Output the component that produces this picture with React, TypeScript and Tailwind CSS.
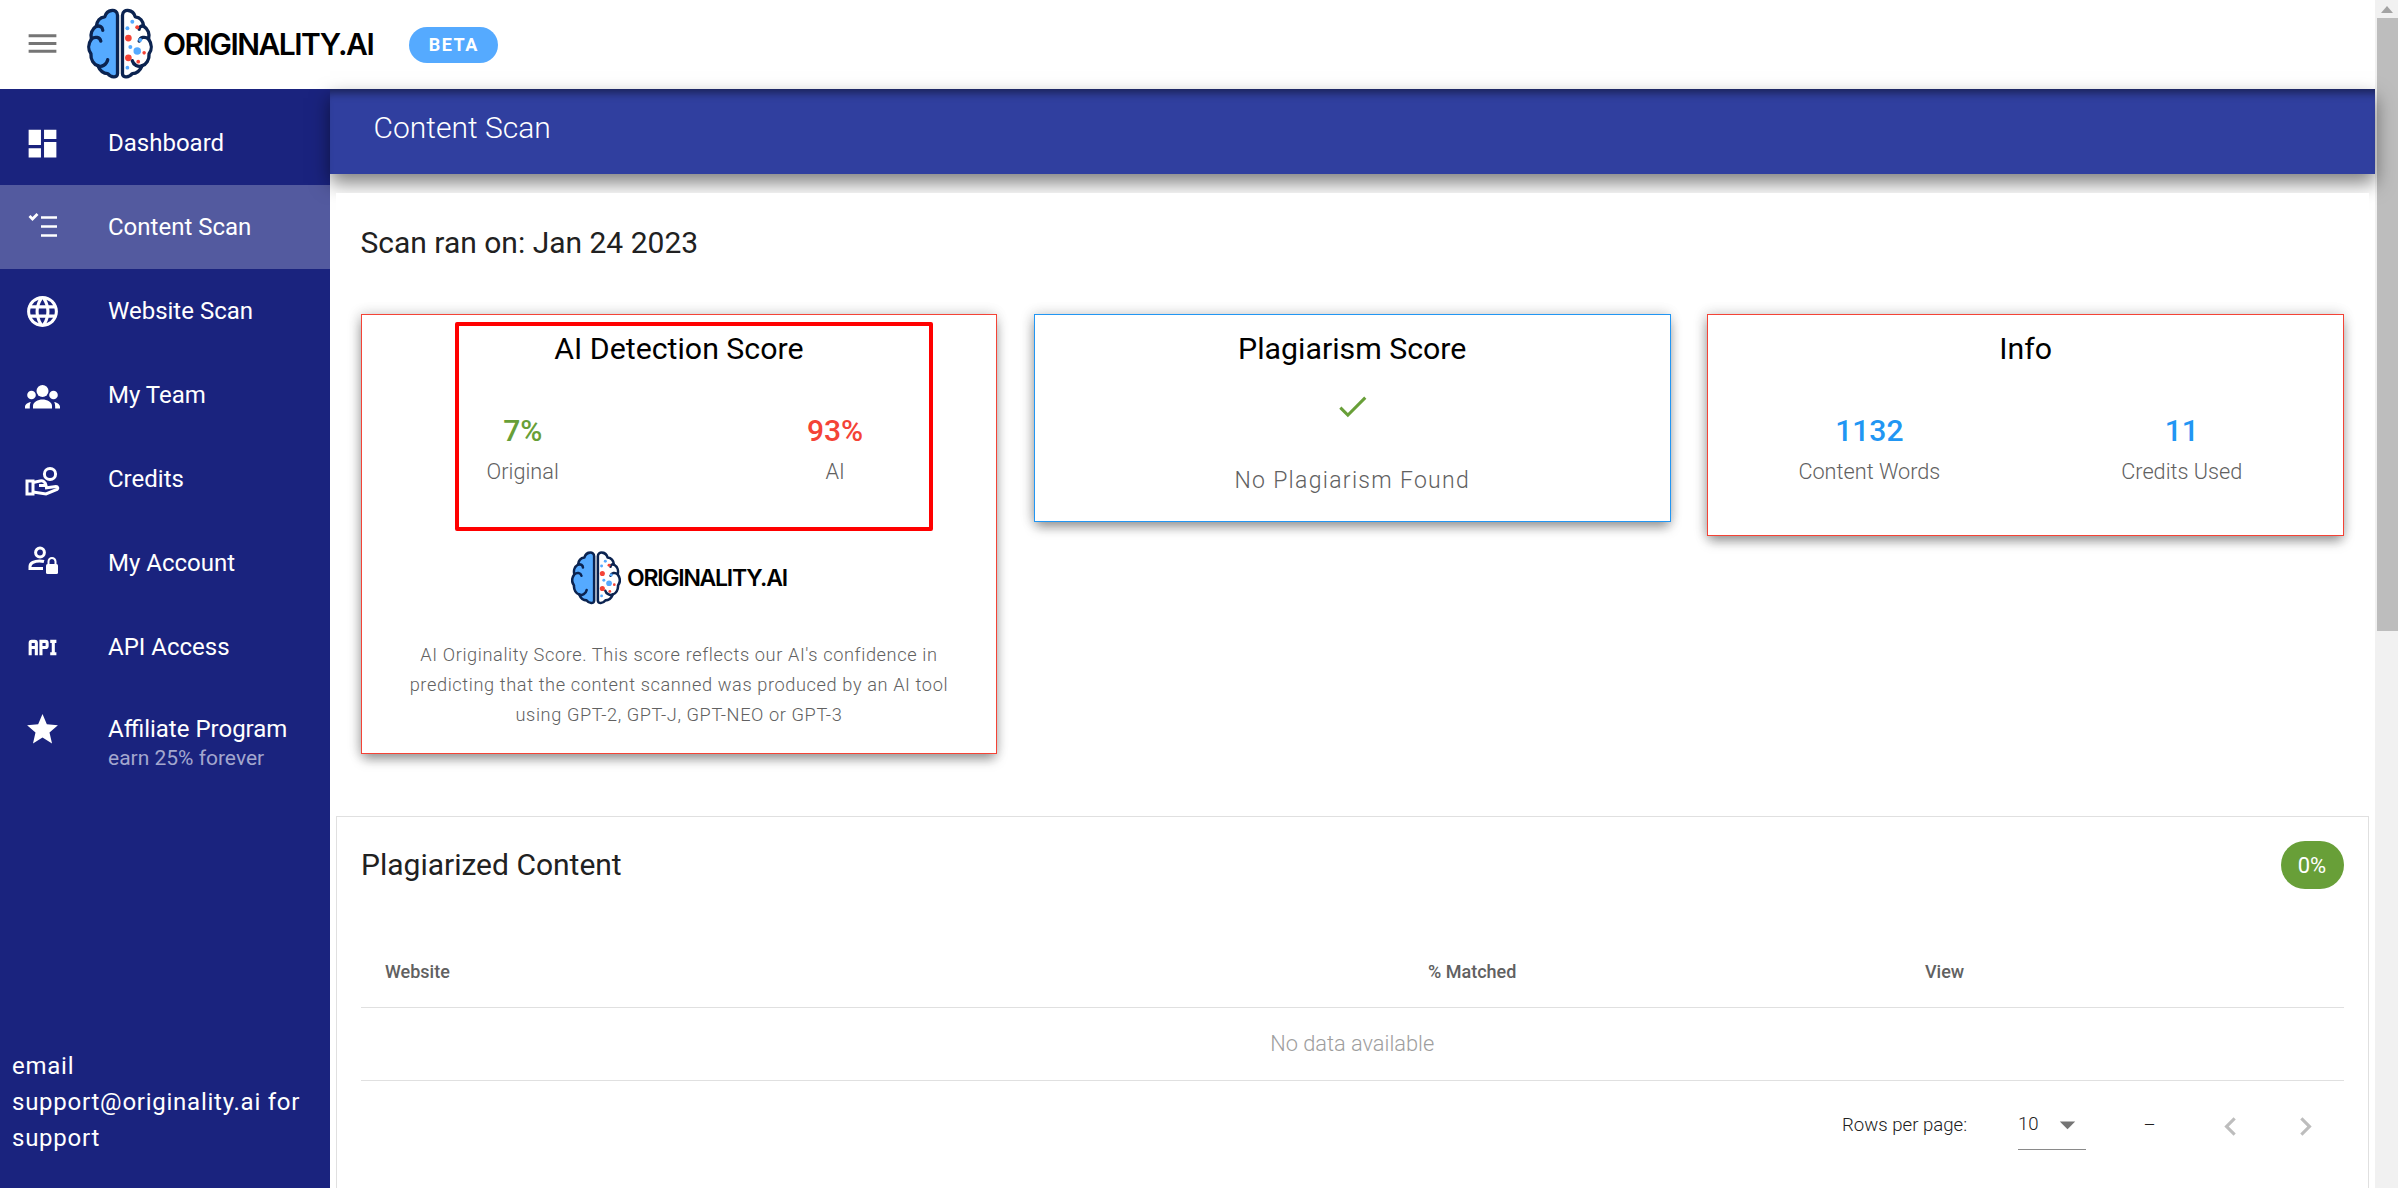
import type { ReactNode } from "react";
import {
  MdArrowDropDown,
  MdCheck,
  MdChevronLeft,
  MdChevronRight,
  MdDashboard,
  MdLanguage,
  MdMenu,
  MdStar,
} from "react-icons/md";

/* ── Logo ── */
const LOBE =
  "M31 7 C31 3 28 1.5 25 2 C21 2.5 19 5 18 8.5 C13 9 10 13 9.5 18 C5 20.5 3 26 4.5 31 C1 36 1 42 4 46 C3.5 52 7 57 11 58 C13 63 17 66 21 66 C24 70 31 71 31 66 Z";

const Brain = ({ className }: { className: string }) => (
  <svg viewBox="0 0 67 72" className={className}>
    <g stroke="#0b2350" strokeWidth="3.4" strokeLinejoin="round" strokeLinecap="round">
      <path d={LOBE} fill="#55aaff" />
      <path d="M4.5 31 C8 28 13 29 14 33 M9.5 18 C13 17 16 19 16 22 M11 58 C15 60 20 57 21 52" fill="none" />
      <g transform="matrix(-1 0 0 1 67 0)">
        <path d={LOBE} fill="#ffffff" />
        <path d="M4.5 31 C8 28 13 29 14 33 M9.5 18 C12 17 14 19 14 21 M11 58 C15 60 20 57 21 53" fill="none" />
      </g>
    </g>
    <circle cx="46" cy="13.5" r="2" fill="#55aaff" />
    <circle cx="51" cy="19" r="2" fill="#f44336" />
    <circle cx="41" cy="20" r="2" fill="#55aaff" />
    <circle cx="42" cy="30" r="3.4" fill="#f44336" />
    <circle cx="54" cy="32" r="2" fill="#55aaff" />
    <circle cx="44" cy="39" r="2" fill="#55aaff" />
    <circle cx="51" cy="43" r="3.8" fill="#55aaff" />
    <circle cx="58" cy="45" r="1.8" fill="#f44336" />
    <circle cx="42" cy="50" r="3.4" fill="#f44336" />
    <circle cx="52" cy="54" r="1.9" fill="#f44336" />
    <circle cx="41" cy="60" r="1.9" fill="#55aaff" />
  </svg>
);

/* ── Sidebar icons the packages don't have ── */
const ChecklistIcon = () => (
  <svg viewBox="0 0 37 37" className="w-[37px] h-[37px]" fill="none" stroke="#fff" strokeWidth="2.6">
    <path d="M17 8.5h16M17 17.5h16M17 26.5h16" />
    <path d="M5.5 7l3 3 5-5" strokeWidth="2.8" />
  </svg>
);

const TeamIcon = () => (
  <svg viewBox="0 0 37 37" className="w-[37px] h-[37px]" fill="#fff">
    <circle cx="18.500" cy="14" r="6" />
    <circle cx="7.500" cy="18" r="4.300" />
    <circle cx="29.500" cy="18" r="4.300" />
    <path d="M9 31.500V29C9 25 14 22.500 18.500 22.500S28 25 28 29v2.500Z" />
    <path d="M1 31.500V30C1 27.500 3.500 25.500 6.800 25c-.8 1.500-1 3-1 6.500Z" />
    <path d="M36 31.500V30c0-2.500-2.500-4.500-5.800-5 .8 1.500 1 3 1 6.500Z" />
  </svg>
);

const CreditsIcon = () => (
  <svg viewBox="0 0 37 37" className="w-[37px] h-[37px]" fill="none" stroke="#fff" strokeWidth="3">
    <circle cx="26" cy="13" r="5.6" />
    <path d="M3 20h6v13H3z" />
    <path d="M9 21.500l7-1.500c3-.6 5.500 1 6 4.500h-7" />
    <path d="M21 27l11-1.500c1.800 0 2.500 2 1 3L22 33l-13-2" />
  </svg>
);

const AccountIcon = () => (
  <svg viewBox="0 0 37 37" className="w-[37px] h-[37px]" fill="none" stroke="#fff" strokeWidth="3">
    <circle cx="16" cy="7.500" r="4.400" />
    <path d="M20 16.500c-1.500-.4-3-.6-4.500-.6C10.500 15.900 6 18 6 21.500v2h13" />
    <rect x="22" y="19" width="12" height="10" rx="1.500" fill="#fff" stroke="none" />
    <path d="M24.500 19v-2.500a3.500 3.500 0 0 1 7 0V19" strokeWidth="2" />
  </svg>
);

const ApiIcon = () => (
  <svg viewBox="0 0 24 24" className="w-[37px] h-[37px]" fill="#fff">
    <path d="M7 7H5A2 2 0 0 0 3 9V17H5V13H7V17H9V9A2 2 0 0 0 7 7M7 11H5V9H7M14 7H10V17H12V13H14A2 2 0 0 0 16 11V9A2 2 0 0 0 14 7M14 11H12V9H14M20 9V15H21V17H17V15H18V9H17V7H21V9Z" />
  </svg>
);

const NAV_ITEMS: { label: string; icon: ReactNode; active?: boolean }[] = [
  { label: "Dashboard", icon: <MdDashboard size={37} color="#fff" /> },
  { label: "Content Scan", icon: <ChecklistIcon />, active: true },
  { label: "Website Scan", icon: <MdLanguage size={37} color="#fff" /> },
  { label: "My Team", icon: <TeamIcon /> },
  { label: "Credits", icon: <CreditsIcon /> },
  { label: "My Account", icon: <AccountIcon /> },
  { label: "API Access", icon: <ApiIcon /> },
];

const Stat = ({ value, label, color }: { value: string; label: string; color: string }) => (
  <div className="flex flex-col items-center">
    <span className={`text-[30px] leading-[40px] font-medium ${color}`}>{value}</span>
    <span className="mt-[5px] text-[21.700px] leading-[32px] font-light text-[#616161]">{label}</span>
  </div>
);

const CARD_SHADOW = "shadow-[0_7px_11px_-2px_rgba(0,0,0,0.35),-2px_0_12px_rgba(0,0,0,0.15),0_0_14px_rgba(0,0,0,0.08)]";

export default function App() {
  return (
    <div className="flex h-screen w-full overflow-hidden bg-white font-[Roboto,sans-serif]">
      <div className="flex flex-col flex-1 min-w-0">
        {/* ── Top bar ── */}
        <header className="flex items-center h-[89px] shrink-0 bg-white">
          <MdMenu size={37} color="#757575" className="ml-[24px] -mt-[3px]" />
          <Brain className="ml-[26px] w-[66px] h-[72px] -mt-[2px]" />
          <span className="ml-[10px] -mt-[1px] font-[Inter,sans-serif] text-[30px] font-semibold tracking-[-1.5px] text-black leading-none">
            ORIGINALITY.AI
          </span>
          <span className="ml-[36px] flex items-center justify-center w-[89px] h-[36px] rounded-full bg-[#55aaff] text-white text-[18px] font-bold tracking-[1.5px]">
            BETA
          </span>
        </header>

        <div className="flex flex-1 min-h-0">
          {/* ── Sidebar ── */}
          <aside className="flex flex-col w-[329.5px] shrink-0 bg-[#1a237e] text-white">
            <nav className="mt-[12px]">
              {NAV_ITEMS.map(({ label, icon, active }) => (
                <div key={label} className={`flex items-center h-[84px] ${active ? "bg-[#535a9f]" : ""}`}>
                  <span className="ml-[24px] w-[37px] h-[37px] shrink-0">{icon}</span>
                  <span className="ml-[47px] text-[24px] leading-none">{label}</span>
                </div>
              ))}
              <div className="flex items-start h-[84px]">
                <MdStar size={37} color="#fff" className="ml-[24px] mt-[22px] shrink-0" />
                <div className="ml-[47px] mt-[26px] flex flex-col">
                  <span className="text-[24px] leading-[28px]">Affiliate Program</span>
                  <span className="text-[21px] leading-[30px] text-[#a3a7ce]">earn 25% forever</span>
                </div>
              </div>
            </nav>
            <p className="mt-auto mb-[32px] px-[12px] text-[24px] leading-[36px] tracking-[0.75px]">
              email support@originality.ai for support
            </p>
          </aside>

          {/* ── Main ── */}
          <main className="relative flex-1 min-w-0 bg-white">
            <div className="relative z-10 flex items-center h-[85px] pb-[9px] pl-[44px] bg-[#303f9f] text-white text-[30px] font-light shadow-[inset_0_10px_8px_-6px_rgba(0,0,0,0.45),0_9px_18px_rgba(0,0,0,0.5)]">
              Content Scan
            </div>

            <section className="relative z-20 mt-[19px] mx-[6px] h-[623px] bg-white px-[25px]">
              <h2 className="pt-[31.5px] text-[30px] leading-[36px] text-[#212121]">Scan ran on: Jan 24 2023</h2>

              <div className="mt-[53.5px] grid grid-cols-3 gap-[36.5px] items-start">
                {/* AI score */}
                <div className={`relative h-[440px] bg-white border border-[#f44336] ${CARD_SHADOW}`}>
                  <h3 className="pt-[16px] text-center text-[30.300px] leading-[36px] text-black">AI Detection Score</h3>
                  <div className="mt-[44px] grid grid-cols-2 px-[5px]">
                    <Stat value="7%" label="Original" color="text-[#689f38]" />
                    <Stat value="93%" label="AI" color="text-[#f44336]" />
                  </div>
                  <div className="mt-[63px] flex items-center justify-center">
                    <Brain className="w-[50px] h-[54px]" />
                    <span className="ml-[6px] font-[Inter,sans-serif] text-[23px] font-semibold tracking-[-1.25px] text-black leading-none">
                      ORIGINALITY.AI
                    </span>
                  </div>
                  <p className="mt-[35px] px-[36px] text-center text-[18.200px] leading-[30px] font-light tracking-[0.6px] text-[#616161]">
                    AI Originality Score. This score reflects our AI's confidence in predicting that the content scanned was produced by an AI tool using GPT-2, GPT-J, GPT-NEO or GPT-3
                  </p>
                  {/* hand-drawn highlight over the card */}
                  <div className="absolute left-[93px] top-[7px] w-[478px] h-[209px] border-[4px] border-[#ff0000] rounded-[2px]" />
                </div>

                {/* Plagiarism */}
                <div className={`h-[208px] bg-white border border-[#2196f3] flex flex-col items-center ${CARD_SHADOW}`}>
                  <h3 className="pt-[16px] text-[30.300px] leading-[36px] text-black">Plagiarism Score</h3>
                  <MdCheck size={37} color="#689f38" className="mt-[20.5px]" />
                  <p className="mt-[40px] text-[23px] leading-[32px] font-light tracking-[1.3px] text-[#616161]">No Plagiarism Found</p>
                </div>

                {/* Info */}
                <div className={`h-[222px] bg-white border border-[#f44336] ${CARD_SHADOW}`}>
                  <h3 className="pt-[16px] text-center text-[30.300px] leading-[36px] text-black">Info</h3>
                  <div className="mt-[44px] grid grid-cols-2 px-[5px]">
                    <Stat value="1132" label="Content Words" color="text-[#2196f3]" />
                    <Stat value="11" label="Credits Used" color="text-[#2196f3]" />
                  </div>
                </div>
              </div>
            </section>

            {/* ── Plagiarized content table ── */}
            <section className="relative z-20 mx-[6px] px-[24.500px] h-[400px] border border-[#e0e0e0] bg-white">
              <div className="flex items-center justify-between pt-[24px]">
                <h2 className="text-[30px] leading-[48px] text-[#212121]">Plagiarized Content</h2>
                <span className="flex items-center justify-center w-[63px] h-[48px] rounded-full bg-[#689f38] text-white text-[22px]">0%</span>
              </div>

              <div className="mt-[47px] grid grid-cols-[1043px_497px_1fr] items-center h-[72px] border-b border-[#e0e0e0] text-[18px] font-medium text-[#616161]">
                <span className="pl-[24px]">Website</span>
                <span className="pl-[24px]">% Matched</span>
                <span className="pl-[24px]">View</span>
              </div>
              <div className="flex items-center justify-center h-[73px] border-b border-[#e0e0e0] text-[21.800px] font-light text-[#9e9e9e]">
                No data available
              </div>

              <div className="flex items-center h-[90px] pl-[1481px] text-[18.600px] font-light text-[#212121]">
                <span className="w-[176px]">Rows per page:</span>
                <div className="flex items-center justify-between w-[68px] h-[38px] mt-[9px] pb-[11px] border-b border-[#8a8a8a]">
                  <span>10</span>
                  <MdArrowDropDown size={37} color="#757575" />
                </div>
                <span className="ml-[57.5px]">–</span>
                <MdChevronLeft size={37} color="#bdbdbd" className="ml-[56.5px]" />
                <MdChevronRight size={37} color="#bdbdbd" className="ml-[37.5px]" />
              </div>
            </section>
          </main>
        </div>
      </div>

      {/* ── Page scrollbar ── */}
      <div className="flex flex-col w-[23px] shrink-0 bg-[#f1f1f1]">
        <div className="flex items-center justify-center h-[18px]">
          <span className="w-0 h-0 border-x-[6px] border-x-transparent border-b-[7px] border-b-[#a3a3a3]" />
        </div>
        <div className="ml-[2px] h-[613px] bg-[#bdbdbd]" />
      </div>
    </div>
  );
}
